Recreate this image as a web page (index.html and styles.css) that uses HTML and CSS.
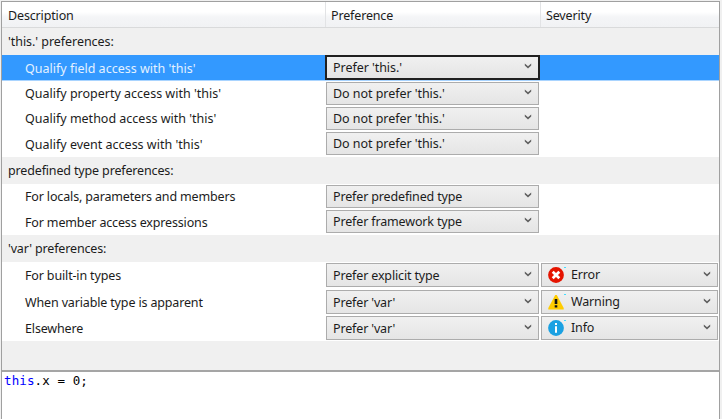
FILE: index.html
```html
<!DOCTYPE html>
<html lang="en">
<head>
<meta charset="utf-8">
<title>Code style preferences</title>
<link rel="stylesheet" href="styles.css">
</head>
<body>
<svg width="0" height="0" class="defs">
<symbol id="chev" viewBox="0 0 8 6"><path d="M0.8 0.4v2L4 5.4 7.2 2.4V0.4L4 3.3z" fill="#606060"/></symbol>
</svg>
<main class="panel">
<div class="row head"><span class="c1">Description</span><span class="c2">Preference</span><span class="c3">Severity</span></div>
<div class="group"><span class="wide">'this.' preferences:</span></div>
<div class="row sel"><span class="label wider">Qualify field access with 'this'</span><div class="combo"><span class="wide">Prefer 'this.'</span><svg class="chev"><use href="#chev"/></svg></div></div>
<div class="row"><span class="label wider">Qualify property access with 'this'</span><div class="combo"><span class="wide">Do not prefer 'this.'</span><svg class="chev"><use href="#chev"/></svg></div></div>
<div class="row"><span class="label wider">Qualify method access with 'this'</span><div class="combo"><span class="wide">Do not prefer 'this.'</span><svg class="chev"><use href="#chev"/></svg></div></div>
<div class="row end"><span class="label wider">Qualify event access with 'this'</span><div class="combo"><span class="wide">Do not prefer 'this.'</span><svg class="chev"><use href="#chev"/></svg></div></div>
<div class="group"><span>predefined type preferences:</span></div>
<div class="row"><span class="label">For locals, parameters and members</span><div class="combo"><span>Prefer predefined type</span><svg class="chev"><use href="#chev"/></svg></div></div>
<div class="row end"><span class="label">For member access expressions</span><div class="combo"><span>Prefer framework type</span><svg class="chev"><use href="#chev"/></svg></div></div>
<div class="group"><span>'var' preferences:</span></div>
<div class="row tall extra"><span class="label">For built-in types</span><div class="combo"><span>Prefer explicit type</span><svg class="chev"><use href="#chev"/></svg></div>
<div class="combo sev"><svg class="icon" viewBox="0 0 16 16"><circle cx="8" cy="8" r="7.9" fill="#e51400"/><path d="M4.7 4.7l6.6 6.6M11.3 4.7l-6.6 6.6" stroke="#fff" stroke-width="2.7"/></svg><i class="dot"></i><span>Error</span><svg class="chev"><use href="#chev"/></svg></div></div>
<div class="row tall"><span class="label">When variable type is apparent</span><div class="combo"><span>Prefer 'var'</span><svg class="chev"><use href="#chev"/></svg></div>
<div class="combo sev"><svg class="icon" viewBox="0 0 16 16"><path d="M7.2 1h1.6L15.7 14v1.4H.3V14z" fill="#fc0"/><path d="M6.7 5h2.6v5H6.7zM6.7 11.3h2.6v2.3H6.7z" fill="#111"/></svg><i class="dot"></i><span>Warning</span><svg class="chev"><use href="#chev"/></svg></div></div>
<div class="row tall"><span class="label">Elsewhere</span><div class="combo"><span>Prefer 'var'</span><svg class="chev"><use href="#chev"/></svg></div>
<div class="combo sev"><svg class="icon" viewBox="0 0 16 16"><circle cx="8" cy="8" r="7.9" fill="#1ba1e2"/><path d="M7 3h2v2H7zM7 6.3h2v6.5H7z" fill="#fff"/></svg><i class="dot"></i><span>Info</span><svg class="chev"><use href="#chev"/></svg></div></div>
<div class="filler"></div>
<pre class="code"><b>this</b>.x = 0;</pre>
</main>
</body>
</html>
```
FILE: styles.css
```css
* { box-sizing: border-box; }
html, body { margin: 0; height: 100%; overflow: hidden; }
body {
  padding: 1px 2px 0 1px;
  background: #f0f0f0;
  color: #1c1c1c;
  font: 12.5px/18px "Noto Sans", "Open Sans", sans-serif;
  letter-spacing: -0.15px;
}
.wide { letter-spacing: -0.05px; }
.wider { letter-spacing: 0; }
.defs { position: absolute; }
.panel {
  display: flex;
  flex-direction: column;
  height: 418px;
  border: 1px solid #a0a0a0;
  border-bottom: 0;
  background: #fff;
  white-space: nowrap;
}
.row {
  display: grid;
  grid-template-columns: 324px 215px 1fr;
  height: 25px;
  flex: none;
}
.row.end { height: 26px; }
.row.tall { height: 26px; }
.row.extra { height: 27px; }
.head {
  height: 26px;
  border-bottom: 1px solid #d9dadb;
  background: linear-gradient(#fff 40%, #f4f5f7 60%, #f1f2f4);
  line-height: 27px;
}
.head span { height: 25px; padding-left: 5px; border-right: 1px solid #e2e3e5; }
.head .c1 { padding-left: 6px; }
.head .c3 { border: 0; }
.group {
  height: 27px;
  flex: none;
  padding: 5px 0 0 6px;
  background: #f0f0f0;
}
.label { padding: 4px 0 0 23px; }
.end .label, .tall .label { padding-top: 5px; }
.sel { height: 26px; background: linear-gradient(#3399ff 25px, #a9d4ff 25px); }
.sel .label { padding-top: 5px; color: #e4f1ff; }
.combo {
  display: flex;
  align-items: center;
  width: 213px;
  height: 23px;
  margin-top: 1px;
  padding: 0 6px;
  border: 1px solid #acacac;
  background: linear-gradient(#f0f0f0, #e5e5e5);
}
.sel .combo {
  width: 215px;
  height: 25px;
  margin: 0 0 0 -1px;
  padding: 0 6px;
  border: 2px solid #202020;
}
.combo > span { padding-top: 1px; }
.tall .combo { height: 24px; }
.tall .combo > span { padding-top: 2px; }
.chev { width: 8px; height: 6px; margin: -3px 0 0 auto; }
.combo.sev { width: 177px; height: 24px; }
.icon { width: 16px; height: 16px; }
.dot { align-self: flex-start; width: 2px; height: 1px; margin-top: 3px; background: #4df; }
.tall .combo.sev > span { padding: 0 0 0 5px; }
.filler { height: 29px; flex: none; background: #f0f0f0; }
.code {
  flex: 1;
  margin: 0;
  padding: 0 2px;
  border-top: 2px solid #a5a5a5;
  color: #000;
  font: 12.5px/18px "DejaVu Sans Mono", monospace;
  letter-spacing: 0.1px;
}
.code b { color: #00f; font-weight: 400; }
```
